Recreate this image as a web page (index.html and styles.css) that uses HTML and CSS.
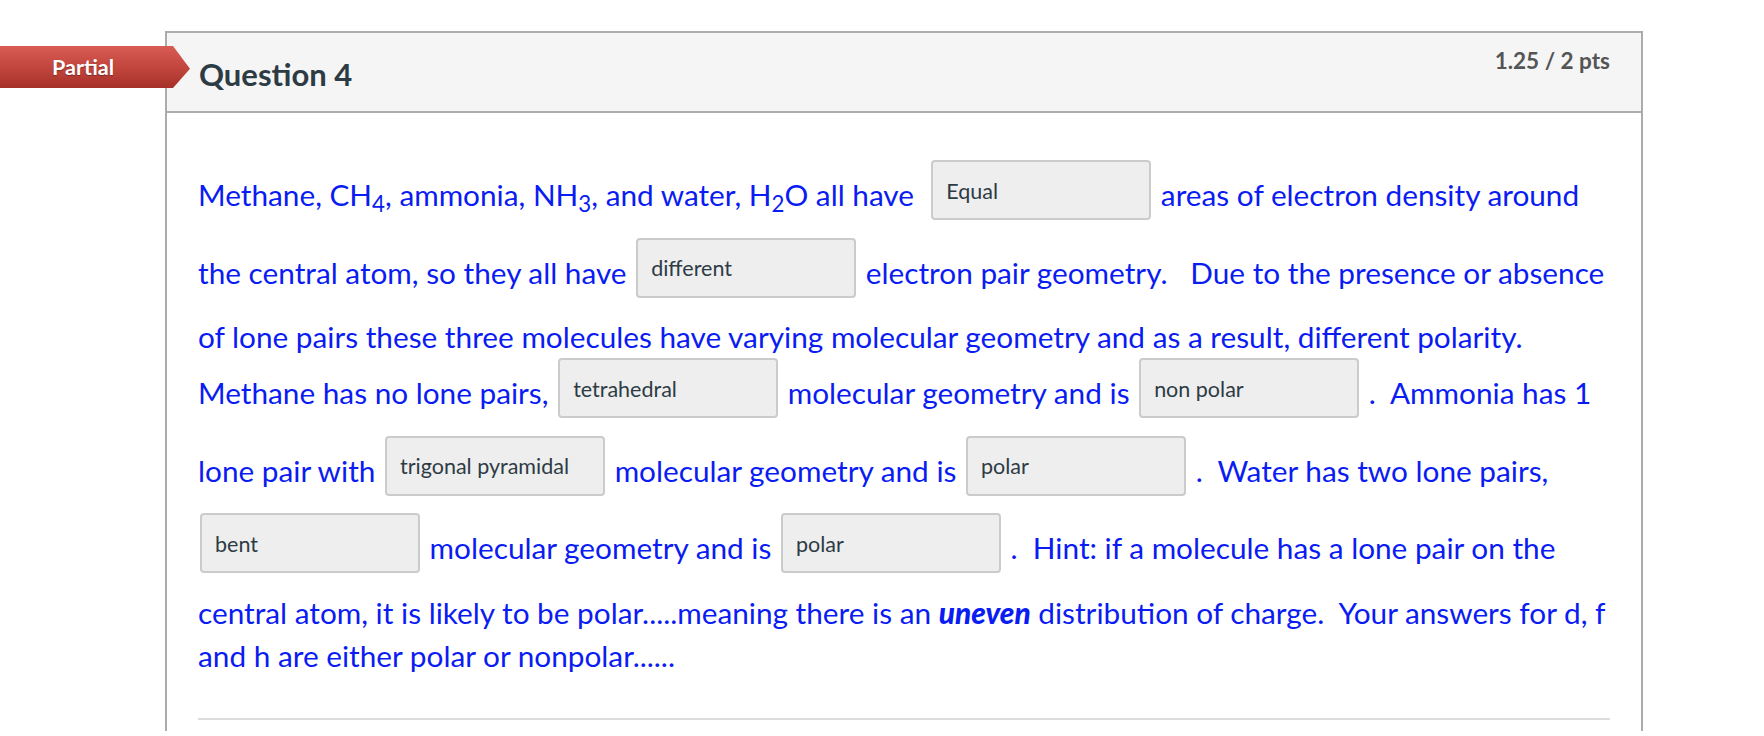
FILE: index.html
```html
<!DOCTYPE html>
<html lang="en">
<head>
<meta charset="utf-8">
<title>Question 4</title>
<link rel="stylesheet" href="styles.css">
</head>
<body>
<div class="page">
  <div class="answer-arrow"><span class="arrow-label">Partial</span></div>
  <div class="card">
    <div class="card-header">
      <h2 class="question-name">Question 4</h2>
      <div class="points">1.25 / 2 pts</div>
    </div>
    <div class="card-body">
      <p class="question-text">Methane, CH<sub>4</sub>, ammonia, NH<sub>3</sub>, and water, H<sub>2</sub>O all have&nbsp; <span class="answer-box">Equal</span> areas of electron density around the central atom, so they all have <span class="answer-box">different</span> electron pair geometry. &nbsp; Due to the presence or absence of lone pairs these three molecules have varying molecular geometry and as a result, different polarity. Methane has no lone pairs, <span class="answer-box">tetrahedral</span> molecular geometry and is <span class="answer-box">non polar</span> .&nbsp; Ammonia has 1 lone pair with <span class="answer-box">trigonal pyramidal</span> molecular geometry and is <span class="answer-box">polar</span> .&nbsp; Water has two lone pairs, <span class="answer-box">bent</span> molecular geometry and is <span class="answer-box">polar</span> .&nbsp; Hint: if a molecule has a lone pair on the central atom, it is likely to be polar.....meaning there is an <strong><em>uneven</em></strong> distribution of charge.&nbsp; Your answers for d, f and h are either polar or nonpolar......</p>
      <hr class="divider">
    </div>
  </div>
</div>
</body>
</html>
```
FILE: styles.css
```css
html, body {
  margin: 0;
  padding: 0;
  background: #ffffff;
}

body {
  font-family: Lato, "Open Sans", "Liberation Sans", sans-serif;
  color: #2d3b45;
  overflow: hidden;
}

.page {
  position: relative;
  padding-top: 31px;
  height: 705px;
}

.answer-arrow {
  position: absolute;
  left: 0;
  top: 46px;
  width: 190px;
  height: 42px;
  background: linear-gradient(#d85c53 0%, #c0443b 55%, #a6302a 100%);
  clip-path: polygon(0 0, 173px 0, 190px 54%, 173px 100%, 0 100%);
  z-index: 2;
}

.arrow-label {
  display: block;
  width: 166px;
  text-align: center;
  font-size: 21.5px;
  font-weight: 700;
  line-height: 42px;
  color: #ffffff;
  text-shadow: 0 1px 1px rgba(0, 0, 0, 0.35);
}

.card {
  margin-left: 165px;
  width: 1478px;
  box-sizing: border-box;
  border: 2px solid #acacac;
  border-bottom: none;
  height: 700px;
}

.card-header {
  display: flex;
  justify-content: space-between;
  align-items: flex-start;
  height: 78px;
  padding: 0 31px 0 32px;
  background: #f5f5f5;
  border-bottom: 2px solid #acacac;
}

.question-name {
  margin: 23px 0 0 0;
  font-size: 31px;
  font-weight: 700;
  line-height: 1.2;
  color: #2d3b45;
}

.points {
  margin-top: 14px;
  font-size: 22.5px;
  font-weight: 700;
  line-height: 1.2;
  color: #555555;
}

.card-body {
  padding: 47px 31px 0 31px;
}

.question-text {
  margin: 0;
  font-size: 29.75px;
  line-height: 43px;
  color: #0a1cf2;
}

.question-text sub {
  font-size: 75%;
  line-height: 0;
  position: relative;
  vertical-align: baseline;
  bottom: -0.25em;
}

.question-text strong {
  font-weight: 900;
}

.answer-box {
  display: inline-flex;
  align-items: center;
  box-sizing: border-box;
  width: 220px;
  height: 60px;
  margin: 0 2px 17.5px 2px;
  padding: 3px 13px 0 13px;
  vertical-align: middle;
  background: #eeeeee;
  border: 2px solid #cbcbcb;
  border-radius: 4px;
  font-size: 21.5px;
  line-height: 1;
  color: #2d3b45;
}

.divider {
  margin: 41px 0 0 0;
  border: none;
  height: 2px;
  background: #dcdcdc;
}
```
